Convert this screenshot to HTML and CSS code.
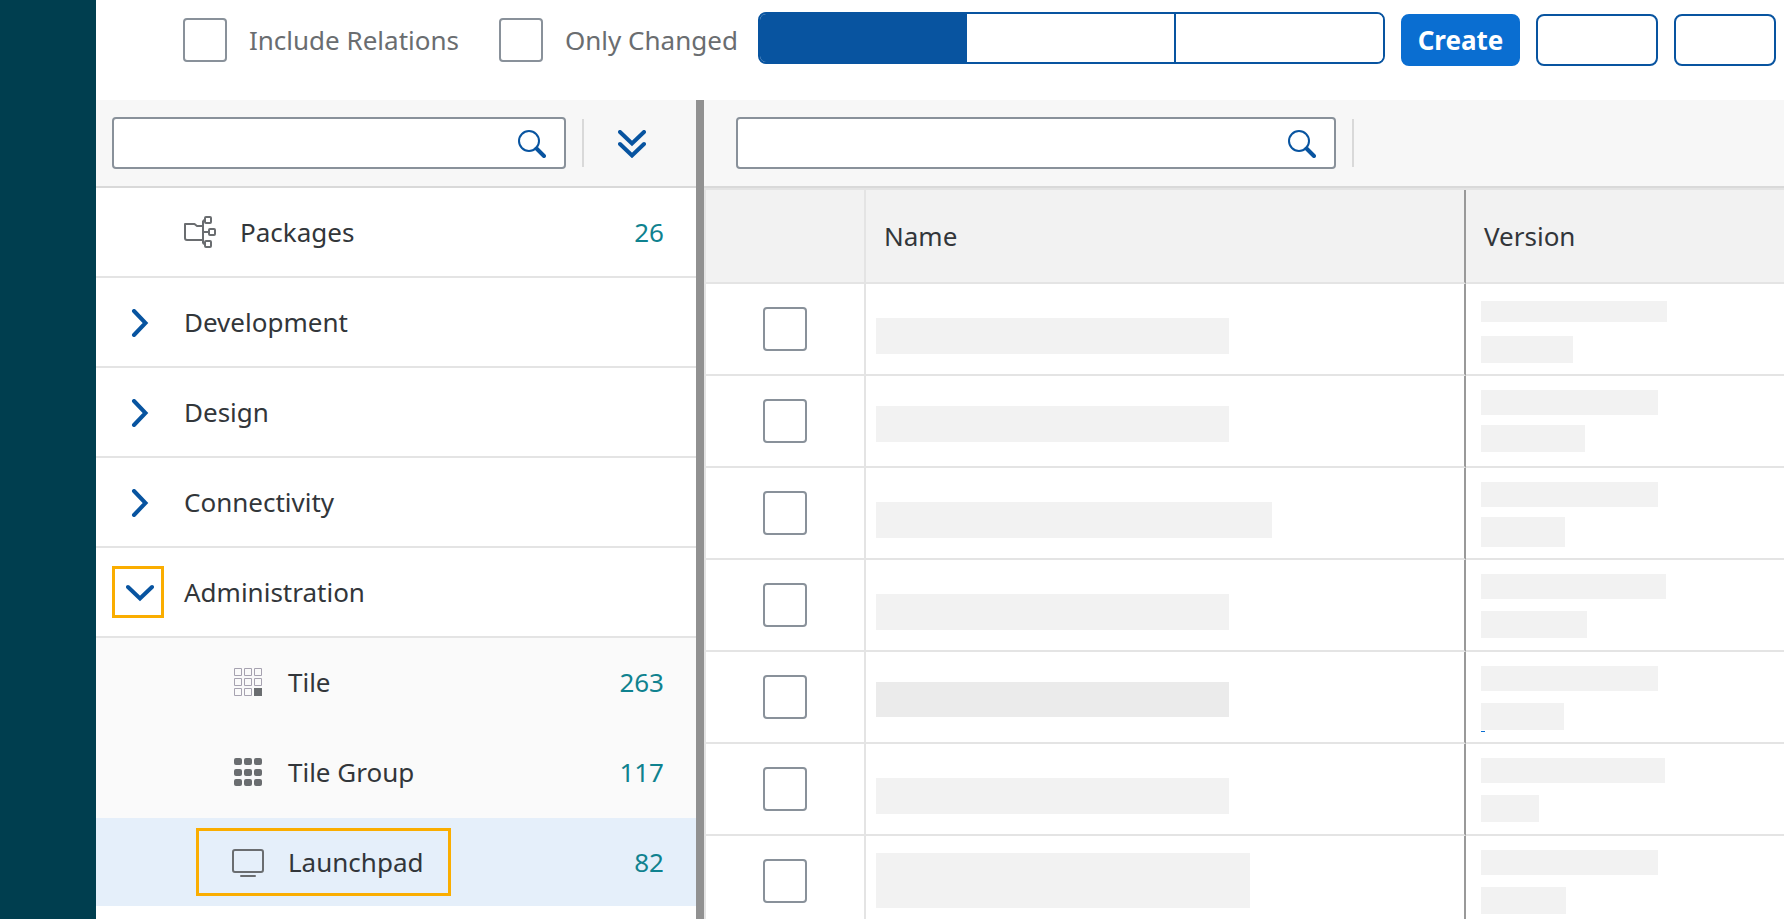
FILE: index.html
```html
<!DOCTYPE html>
<html lang="en">
<head>
<meta charset="utf-8">
<title>Administration – Launchpad</title>
<link rel="stylesheet" href="styles.css">
</head>
<body>
<svg class="sprite" aria-hidden="true">
  <symbol id="search" viewBox="0 0 28 28">
    <circle cx="11" cy="11" r="10" fill="none" stroke="currentColor" stroke-width="2"/>
    <path d="M18.500 18.500L26 26" fill="none" stroke="currentColor" stroke-width="4" stroke-linecap="round"/>
  </symbol>
  <symbol id="expand-all" viewBox="0 0 28 28">
    <path d="M2 2L14 13.500L26 2M2 14L14 25.500L26 14" fill="none" stroke="currentColor" stroke-width="4" stroke-linecap="round"/>
  </symbol>
  <symbol id="right" viewBox="0 0 28 28">
    <path d="M8 2L19.500 14L8 26" fill="none" stroke="currentColor" stroke-width="4" stroke-linecap="round"/>
  </symbol>
  <symbol id="down" viewBox="0 0 28 28">
    <path d="M2 8L14 19.500L26 8" fill="none" stroke="currentColor" stroke-width="4" stroke-linecap="round"/>
  </symbol>
  <symbol id="packages" viewBox="0 0 32 32">
    <g fill="none" stroke="currentColor" stroke-width="2" stroke-linejoin="round">
      <path d="M20 24H3Q1 24 1 22V8H10.500L13 10H20M19 5V27M19 16H25"/>
      <path d="M19 10V6.500Q19 4 21 4M19 23V26Q19 28 21 28"/>
      <rect x="21" y="1" width="6" height="6" rx="1"/>
      <rect x="25" y="13" width="6" height="6" rx="1"/>
      <rect x="21" y="25" width="6" height="6" rx="1"/>
    </g>
  </symbol>
  <symbol id="tile" viewBox="0 0 32 32">
    <g fill="none" stroke="#a6a2b0" stroke-width="1">
      <path d="M2.500 2.500h7v7h-7zM12.500 2.500h7v7h-7zM22.500 2.500h7v7h-7zM2.500 12.500h7v7h-7zM12.500 12.500h7v7h-7zM22.500 12.500h7v7h-7zM2.500 22.500h7v7h-7zM12.500 22.500h7v7h-7z"/>
    </g>
    <rect x="22" y="22" width="8" height="8" fill="currentColor"/>
  </symbol>
  <symbol id="tile-group" viewBox="0 0 32 32">
    <g fill="currentColor">
      <rect x="2" y="2" width="8" height="7" rx="2"/><rect x="12" y="2" width="8" height="7" rx="2"/><rect x="22" y="2" width="8" height="7" rx="2"/>
      <rect x="2" y="13" width="8" height="7" rx="2"/><rect x="12" y="13" width="8" height="7" rx="2"/><rect x="22" y="13" width="8" height="7" rx="2"/>
      <rect x="2" y="23" width="8" height="7" rx="2"/><rect x="12" y="23" width="8" height="7" rx="2"/><rect x="22" y="23" width="8" height="7" rx="2"/>
    </g>
  </symbol>
  <symbol id="launchpad" viewBox="0 0 32 32">
    <rect x="1" y="4" width="30" height="22" rx="2" fill="none" stroke="currentColor" stroke-width="2"/>
    <path d="M9 30H23" stroke="currentColor" stroke-width="2" stroke-linecap="round"/>
  </symbol>
</svg>

<div class="app">
  <div class="rail"></div>
  <div class="main">
    <header class="header">
      <label class="option"><input class="check" type="checkbox">Include Relations</label>
      <label class="option"><input class="check" type="checkbox">Only Changed</label>
      <div class="segments" role="group" aria-label="View">
        <button class="segment segment-on" type="button" aria-label="First view"></button>
        <button class="segment" type="button" aria-label="Second view"></button>
        <button class="segment" type="button" aria-label="Third view"></button>
      </div>
      <div class="actions">
        <button class="button button-primary" type="button">Create</button>
        <button class="button button-wide" type="button" aria-label="Edit"></button>
        <button class="button button-small" type="button" aria-label="More"></button>
      </div>
    </header>

    <div class="panes">
      <nav class="side" aria-label="Content types">
        <div class="toolbar">
          <div class="search">
            <input class="search-input" type="search" aria-label="Search content types">
            <button class="icon-button" type="button" aria-label="Search"><svg class="icon"><use href="#search"/></svg></button>
          </div>
          <span class="separator"></span>
          <button class="icon-button expand" type="button" aria-label="Expand all"><svg class="icon"><use href="#expand-all"/></svg></button>
        </div>
        <ul class="tree">
          <li class="node node-root"><svg class="icon-large"><use href="#packages"/></svg><span class="name">Packages</span><span class="count">26</span></li>
          <li class="node"><button class="toggle" type="button" aria-label="Expand Development"><svg class="icon"><use href="#right"/></svg></button><span class="name">Development</span></li>
          <li class="node"><button class="toggle" type="button" aria-label="Expand Design"><svg class="icon"><use href="#right"/></svg></button><span class="name">Design</span></li>
          <li class="node"><button class="toggle" type="button" aria-label="Expand Connectivity"><svg class="icon"><use href="#right"/></svg></button><span class="name">Connectivity</span></li>
          <li class="node"><button class="toggle toggle-marked" type="button" aria-label="Collapse Administration"><svg class="icon"><use href="#down"/></svg></button><span class="name">Administration</span></li>
          <li class="node node-child"><span class="entry"><svg class="icon-large"><use href="#tile"/></svg>Tile</span><span class="count">263</span></li>
          <li class="node node-child"><span class="entry"><svg class="icon-large"><use href="#tile-group"/></svg>Tile Group</span><span class="count">117</span></li>
          <li class="node node-child node-selected"><span class="entry entry-marked"><svg class="icon-large"><use href="#launchpad"/></svg>Launchpad</span><span class="count">82</span></li>
        </ul>
      </nav>
      <div class="splitter"></div>
      <section class="content">
        <div class="toolbar toolbar-content">
          <div class="search search-wide">
            <input class="search-input" type="search" aria-label="Search items">
            <button class="icon-button" type="button" aria-label="Search"><svg class="icon"><use href="#search"/></svg></button>
          </div>
          <span class="separator"></span>
        </div>
        <table class="table">
          <colgroup><col class="col-select"><col class="col-name"><col></colgroup>
          <thead>
            <tr><th></th><th>Name</th><th>Version</th></tr>
          </thead>
          <tbody>
            <tr>
              <td class="cell-select"><input class="check" type="checkbox" aria-label="Select row 1"></td>
              <td class="cell-bars"><div class="bar bar-name" style="width:353px"></div></td>
              <td class="cell-bars"><div class="bar bar-slim" style="width:186px"></div><div class="bar bar-low" style="width:92px"></div></td>
            </tr>
            <tr>
              <td class="cell-select"><input class="check" type="checkbox" aria-label="Select row 2"></td>
              <td class="cell-bars"><div class="bar bar-name bar-raised" style="width:353px"></div></td>
              <td class="cell-bars"><div class="bar" style="width:177px"></div><div class="bar bar-low bar-near" style="width:104px"></div></td>
            </tr>
            <tr>
              <td class="cell-select"><input class="check" type="checkbox" aria-label="Select row 3"></td>
              <td class="cell-bars"><div class="bar bar-name" style="width:396px"></div></td>
              <td class="cell-bars"><div class="bar" style="width:177px"></div><div class="bar bar-low bar-near bar-thick" style="width:84px"></div></td>
            </tr>
            <tr>
              <td class="cell-select"><input class="check" type="checkbox" aria-label="Select row 4"></td>
              <td class="cell-bars"><div class="bar bar-name" style="width:353px"></div></td>
              <td class="cell-bars"><div class="bar" style="width:185px"></div><div class="bar bar-low" style="width:106px"></div></td>
            </tr>
            <tr>
              <td class="cell-select"><input class="check" type="checkbox" aria-label="Select row 5"></td>
              <td class="cell-bars"><div class="bar bar-name bar-raised bar-dark" style="width:353px"></div></td>
              <td class="cell-bars"><div class="bar" style="width:177px"></div><div class="bar bar-low bar-link" style="width:83px"></div></td>
            </tr>
            <tr>
              <td class="cell-select"><input class="check" type="checkbox" aria-label="Select row 6"></td>
              <td class="cell-bars"><div class="bar bar-name" style="width:353px"></div></td>
              <td class="cell-bars"><div class="bar" style="width:184px"></div><div class="bar bar-low" style="width:58px"></div></td>
            </tr>
            <tr>
              <td class="cell-select"><input class="check" type="checkbox" aria-label="Select row 7"></td>
              <td class="cell-bars"><div class="bar bar-name bar-double" style="width:374px"></div></td>
              <td class="cell-bars"><div class="bar" style="width:177px"></div><div class="bar bar-low" style="width:85px"></div></td>
            </tr>
          </tbody>
        </table>
      </section>
    </div>
  </div>
</div>
</body>
</html>
```
FILE: styles.css
```css
* { box-sizing: border-box; }

body {
  margin: 0;
  font: 26px/36px "Noto Sans", "Open Sans", sans-serif;
  color: #32363a;
  background: #fff;
  overflow: hidden;
}

button, input { font: inherit; margin: 0; }

.sprite { display: none; }

.app { display: flex; height: 100vh; }
.rail { flex: 0 0 96px; background: #003e4f; }
.main { flex: 1; min-width: 0; display: flex; flex-direction: column; }

/* Header */
.header {
  flex: 0 0 100px;
  display: flex;
  justify-content: flex-end;
  align-items: flex-start;
  gap: 16px;
  padding: 12px 8px 0 0;
}
.option {
  display: flex;
  align-items: center;
  gap: 22px;
  min-width: 243px;
  padding-top: 6px;
  color: #6a6d70;
  white-space: nowrap;
}
.option + .option { margin-left: 24px; }

.check {
  appearance: none;
  display: block;
  flex: none;
  width: 44px;
  height: 44px;
  border: 2px solid #89919a;
  border-radius: 4px;
  background: #fff;
}

.segments {
  display: flex;
  width: 627px;
  height: 52px;
  border: 2px solid #0854a0;
  border-radius: 8px;
  overflow: hidden;
}
.segment { flex: 1; border: 0; padding: 0; background: #fff; }
.segment + .segment + .segment { border-left: 2px solid #0854a0; }
.segment-on { background: #0854a0; }

.actions { display: flex; gap: 16px; padding-top: 2px; }
.button {
  height: 52px;
  padding: 0;
  border: 2px solid #0854a0;
  border-radius: 8px;
  background: #fff;
}
.button-primary {
  width: 119px;
  border-color: #0a6ed1;
  background: #0a6ed1;
  color: #fff;
  font-weight: 700;
}
.button-wide { width: 122px; }
.button-small { width: 102px; }

/* Panes */
.panes { flex: 1; min-height: 0; display: flex; }
.side { flex: 0 0 600px; overflow: hidden; }
.splitter { flex: 0 0 8px; background: #919191; }
.content { flex: 1; min-width: 0; overflow: hidden; }

.toolbar {
  display: flex;
  align-items: center;
  gap: 16px;
  height: 88px;
  padding: 0 16px;
  background: #f7f7f7;
  border-bottom: 2px solid #d9d9d9;
}
.toolbar-content { padding: 0 32px; }
.search {
  display: flex;
  align-items: center;
  width: 454px;
  height: 52px;
  padding-right: 8px;
  border: 2px solid #89919a;
  border-radius: 4px;
  background: #fff;
}
.search-wide { width: 600px; }
.search-input {
  flex: 1;
  min-width: 0;
  border: 0;
  outline: 0;
  padding: 0 12px;
  background: none;
}
.separator { width: 2px; height: 48px; background: #d9d9d9; }

.icon-button, .toggle {
  display: flex;
  align-items: center;
  justify-content: center;
  border: 0;
  background: none;
  color: #0854a0;
}
.icon-button { width: 48px; height: 48px; padding: 2px 0 0; }
.expand { width: 64px; }
.icon { flex: none; width: 28px; height: 28px; }
.icon-large { flex: none; width: 32px; height: 32px; color: #6a6d70; }

/* Tree */
.tree { margin: 0; padding: 0; list-style: none; }
.node {
  display: flex;
  align-items: center;
  gap: 20px;
  height: 90px;
  padding: 0 32px 0 16px;
  border-bottom: 2px solid #e4e4e4;
}
.node-root { gap: 24px; padding-left: 88px; }
.toggle { width: 52px; height: 52px; padding: 2px 0 0 4px; }
.toggle-marked { border: 3px solid #faad00; }
.count { margin-left: auto; color: #0f828f; }

.node-child { padding-left: 100px; border-bottom-color: #fafafa; background: #fafafa; }
.node-selected { border-bottom-color: #fff; background: #e5effa; }
.entry {
  display: flex;
  align-items: center;
  gap: 24px;
  height: 68px;
  padding: 0 25px 0 33px;
  border: 3px solid transparent;
}
.entry-marked { border-color: #faad00; }

/* Table */
.table {
  width: 100%;
  table-layout: fixed;
  border-spacing: 0;
  border-top: 2px solid #e4e4e4;
  border-left: 2px solid #e4e4e4;
}
.col-select { width: 160px; }
.col-name { width: 600px; }
.table th, .table td {
  padding: 0;
  border-right: 2px solid #e4e4e4;
  border-bottom: 2px solid #e4e4e4;
}
.table th:nth-child(2), .table td:nth-child(2) { border-right-color: #999; }
.table th:last-child, .table td:last-child { border-right: 0; }
.table th {
  height: 94px;
  padding: 0 18px;
  background: #f2f2f2;
  font-weight: 400;
  text-align: left;
}
.table td { height: 92px; }
.cell-select .check { margin: 0 auto; }
.table .cell-bars { padding: 14px 10px 0; vertical-align: top; }
.table .cell-bars:last-child { padding-left: 15px; }

.bar { height: 25px; background: #f2f2f2; }
.bar-low { height: 27px; margin-top: 12px; }
.bar-near { margin-top: 10px; }
.bar-thick { height: 30px; }
.bar-slim { height: 21px; margin: 3px 0 14px; }
.bar-name { height: 36px; margin-top: 20px; }
.bar-raised { margin-top: 16px; }
.bar-dark { height: 35px; background: #ebebeb; }
.bar-double { height: 55px; margin-top: 3px; }
.bar-link::after {
  content: "";
  display: block;
  width: 4px;
  height: 28px;
  border-bottom: 1px solid #0a6ed1;
}
```
